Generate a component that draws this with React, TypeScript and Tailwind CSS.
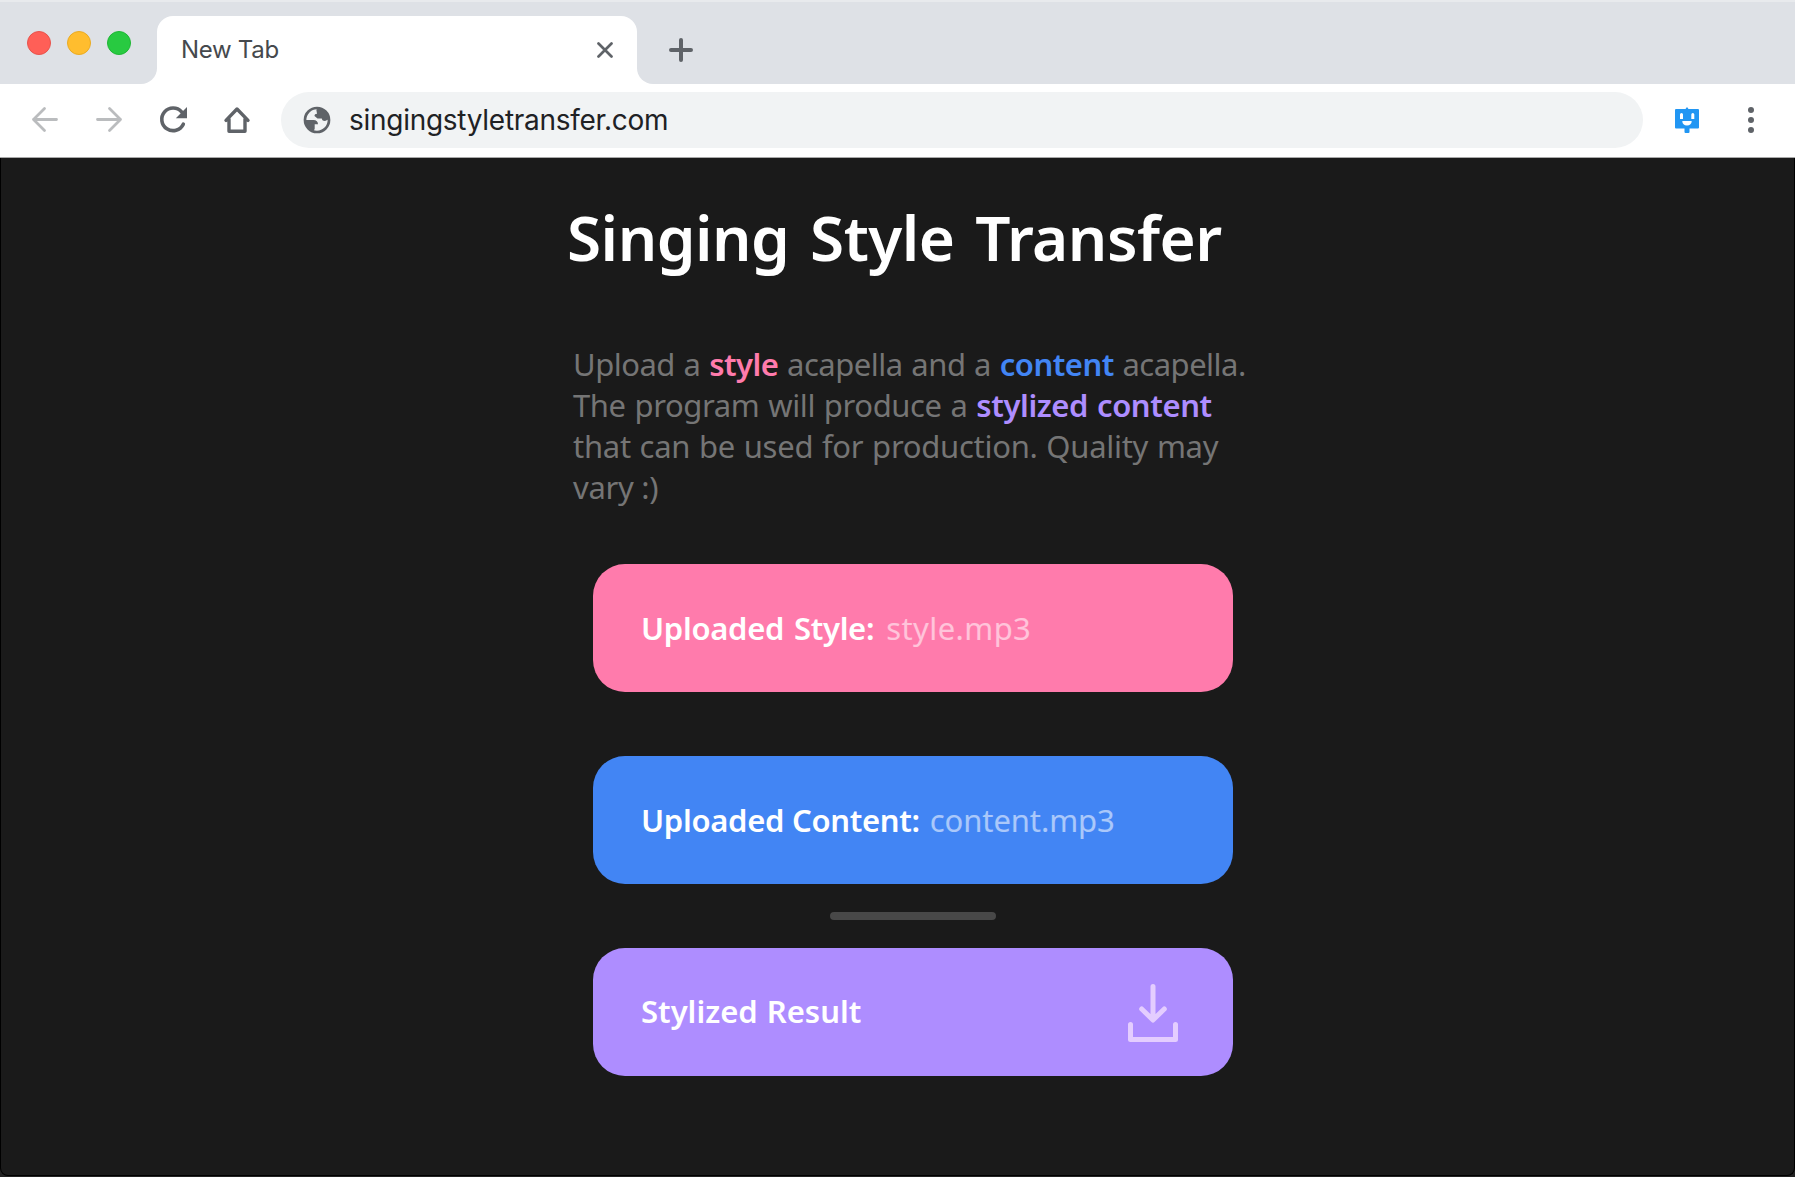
const round = { fill: "none", strokeLinecap: "round", strokeLinejoin: "round" } as const;

function TrafficLights() {
  return (
    <div className="flex gap-4 pl-[27px] pt-[29px]">
      <span className="size-6 rounded-full border border-[#e8534c] bg-[#ff5f57]" />
      <span className="size-6 rounded-full border border-[#eaab22] bg-[#ffbd2e]" />
      <span className="size-6 rounded-full border border-[#1fb735] bg-[#28ca41]" />
    </div>
  );
}

function TabStrip() {
  return (
    <div className="flex h-[84px] border-t-2 border-[#e8eaed] bg-[#dee1e6]">
      <div className="w-[141px] shrink-0">
        <TrafficLights />
      </div>
      <div className="mt-[14px] flex">
        <span className="w-4 bg-white">
          <span className="block h-full rounded-br-2xl bg-[#dee1e6]" />
        </span>
        <div className="flex w-[480px] items-center justify-between rounded-t-2xl bg-white pl-[24px] pr-6">
          <span className="text-2xl tracking-[-0.3px] text-[#45494d]">New Tab</span>
          <svg width="16" height="16" viewBox="0 0 16 16" stroke="#5f6368" strokeWidth="2.7" {...round}>
            <path d="M1.5 1.5l13 13M14.5 1.5l-13 13" />
          </svg>
        </div>
        <span className="w-4 bg-white">
          <span className="block h-full rounded-bl-2xl bg-[#dee1e6]" />
        </span>
        <svg className="ml-4 mt-[22px]" width="24" height="24" viewBox="0 0 24 24" stroke="#5f6368" strokeWidth="4" {...round}>
          <path d="M12 2v20M2 12h20" />
        </svg>
      </div>
    </div>
  );
}

function Toolbar() {
  return (
    <div className="flex h-[74px] items-center border-b border-[#a9a9a9] bg-white pb-px pl-[31px]">
      <svg className="shrink-0" width="28" height="28" viewBox="0 0 28 28" stroke="#babcbe" strokeWidth="2.8" {...round}>
        <path d="M25.500 13.500h-23M13.500 2.500l-11 11 11 11" />
      </svg>
      <svg className="ml-9 shrink-0" width="28" height="28" viewBox="0 0 28 28" stroke="#babcbe" strokeWidth="2.8" {...round}>
        <path d="M2.500 13.500h23M14.500 2.500l11 11-11 11" />
      </svg>
      <svg className="ml-9 shrink-0" width="28" height="28" viewBox="0 0 28 28">
        <path d="M22.600 5.900A11.300 11.300 0 1 0 24.300 18.200" stroke="#5f6368" strokeWidth="3.6" strokeLinecap="round" fill="none" />
        <path d="M28 1v11.200H16.800z" fill="#5f6368" />
      </svg>
      <svg className="ml-9 shrink-0" width="28" height="28" viewBox="0 0 28 28" stroke="#5f6368" strokeWidth="3.4" {...round}>
        <path d="M3 14.400L14 3l11 11.400M6 13v12.300h16V13" />
      </svg>
      <div className="ml-[30px] flex h-14 w-[1362px] items-center rounded-full bg-[#f1f3f4]">
        <svg className="ml-[22px] shrink-0" width="28" height="28" viewBox="0 0 28 28">
          <circle cx="14" cy="14" r="12" fill="none" stroke="#5f6368" strokeWidth="2.7" />
          <path fill="#5f6368" d="M2 14h8.400c3 0 4.600 1.700 4.600 4.300h-3.300v4.200c0 1-.7 1.700-1.700 1.900C4.800 22.500 2 18.500 2 14z" />
          <path fill="#5f6368" d="M13.300 3.500C16 1.700 19 2.400 21 4c3 2 4.600 5.500 4.800 9.300l-3.800 1.700c-2 0-2.800-.6-3.200-2.400h-4.300l-3-2.600c0-1.500.9-2.300 2.500-2.300z" />
        </svg>
        <span className="ml-[18px] text-[28px] tracking-[-0.28px] text-[#202124]">singingstyletransfer.com</span>
      </div>
      <svg className="ml-8 shrink-0" width="24" height="26" viewBox="0 0 24 26">
        <path fill="#2196f3" d="M1 2h9.500L12 0l1.500 2H23a1 1 0 0 1 1 1v17.500a1 1 0 0 1-1 1h-8.500V25a1 1 0 0 1-1 1h-3a1 1 0 0 1-1-1v-3.500H1a1 1 0 0 1-1-1V3a1 1 0 0 1 1-1z" />
        <path fill="#fff" d="M5 7.500a1.500 1.500 0 0 1 3 0v4.500H5zM16.300 7.500a1.500 1.500 0 0 1 3 0v4.500h-3zM7.300 14h9.400c0 3-1.800 4.400-4.700 4.400S7.300 17 7.300 14z" />
      </svg>
      <svg className="ml-[49px] shrink-0" width="6" height="26" viewBox="0 0 6 26" fill="#5f6368">
        <circle cx="3" cy="3" r="3" />
        <circle cx="3" cy="13" r="3" />
        <circle cx="3" cy="23" r="3" />
      </svg>
    </div>
  );
}

function DownloadIcon() {
  return (
    <svg width="52" height="60" viewBox="0 0 52 60" stroke="#e4cdff" strokeWidth="5" {...round}>
      <path d="M26 4.500v33M14.700 27L26 38l11.300-11M3.500 42.500v15h45v-15" />
    </svg>
  );
}

type FileCardProps = { label: string; file: string; tone: string; labelSpacing: string; fileSpacing: string };

function FileCard({ label, file, tone, labelSpacing, fileSpacing }: FileCardProps) {
  return (
    <div className={`flex h-32 items-center rounded-4xl pl-12 text-[31px] ${tone}`}>
      <span className={`font-semibold tracking-[-0.3px] text-white ${labelSpacing}`}>{label}</span>
      <span className={`text-white/55 ${fileSpacing}`}>{file}</span>
    </div>
  );
}

export default function App() {
  return (
    <div className="flex h-[1177px] w-[1795px] flex-col overflow-hidden bg-[#222222] font-['Inter',sans-serif]">
      <TabStrip />
      <Toolbar />
      <main className="mb-px flex grow flex-col rounded-b-lg border-x border-b border-black bg-[#1a1a1a] font-['Noto_Sans',sans-serif]">
        <h1 className="ml-[566px] mt-[34px] text-[62px] leading-[90px] font-semibold tracking-[-0.5px] whitespace-nowrap text-white [word-spacing:5px]">
          Singing Style Transfer
        </h1>
        <p className="ml-[572px] mt-[62px] flex flex-col text-[31px] leading-[41px] tracking-[-0.3px] whitespace-nowrap text-[#757575]">
          <span className="tracking-[-0.5px] [word-spacing:1.1px]">
            Upload a <b className="font-semibold text-[#ff7bac]">style</b> acapella and a{" "}
            <b className="font-semibold text-[#4285f4]">content</b> acapella.
          </span>
          <span className="tracking-[-0.4px] [word-spacing:1.2px]">
            The program will produce a <b className="font-semibold text-[#ae8dff]">stylized content</b>
          </span>
          <span className="tracking-[-0.28px] [word-spacing:1px]">that can be used for production. Quality may</span>
          <span>vary :)</span>
        </p>
        <div className="ml-[592px] mt-14 flex w-[640px] flex-col">
          <FileCard
            label="Uploaded Style:"
            file="style.mp3"
            tone="mb-16 bg-[#ff7bac]"
            labelSpacing="mr-[11px] [word-spacing:2px]"
            fileSpacing="ml-px tracking-[0.4px]"
          />
          <FileCard
            label="Uploaded Content:"
            file="content.mp3"
            tone="bg-[#4285f4]"
            labelSpacing="mr-[9px]"
            fileSpacing="ml-px tracking-[-0.1px]"
          />
          <div className="mx-auto my-7 h-2 w-[166px] rounded-full bg-[#484848]" />
          <div className="flex h-32 items-center justify-between rounded-4xl bg-[#ae8dff] pl-12 pr-[54px] text-[31px]">
            <span className="pb-0.5 font-semibold text-white [word-spacing:1px]">Stylized Result</span>
            <DownloadIcon />
          </div>
        </div>
      </main>
    </div>
  );
}
